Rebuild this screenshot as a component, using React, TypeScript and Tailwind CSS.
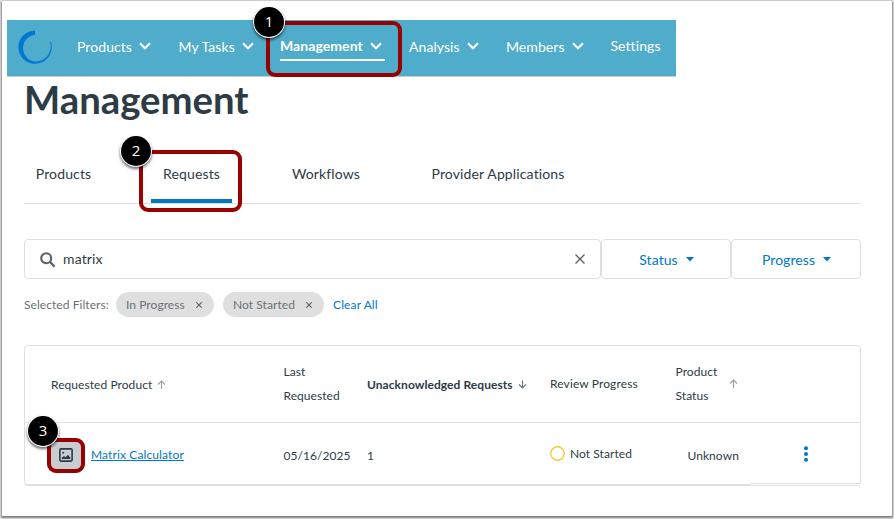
import { ReactNode } from "react";

interface NavItemProps {
  label: string;
  width: string;
  active?: boolean;
  menu?: boolean;
}

interface StepProps {
  value: number;
  className: string;
}

const navItems: NavItemProps[] = [
  { label: "Products", width: "w-[101.5px]", menu: true },
  { label: "My Tasks", width: "w-[101.5px]", menu: true },
  { label: "Management", width: "w-[129px]", menu: true, active: true },
  { label: "Analysis", width: "w-[97px]", menu: true },
  { label: "Members", width: "w-[104.5px]", menu: true },
  { label: "Settings", width: "w-[60px]" },
];

const tabs = [
  { label: "Products", width: "w-[79px]", gap: "mr-[48px]" },
  { label: "Requests", width: "w-[81px]", gap: "mr-[48px]", active: true },
  { label: "Workflows", width: "w-[92px]", gap: "mr-[48px]" },
  { label: "Provider Applications", width: "w-[156px]", gap: "" },
];

// numbered marker of a walkthrough step
const Step = ({ value, className }: StepProps) => (
  <span
    className={`absolute z-10 flex size-[30px] items-center justify-center rounded-full bg-black pb-px text-[15px] leading-none tracking-normal text-white shadow-[0_0_0_1px_#fff,0_2px_3px_1px_rgba(0,0,0,0.6)] font-['Open_Sans',sans-serif] ${className}`}
  >
    {value}
  </span>
);

const Highlight = ({ className }: { className: string }) => (
  <span
    className={`pointer-events-none absolute rounded-[9px] border-4 border-[#990000] ${className}`}
  />
);

const Chevron = () => (
  <svg width="12" height="8" viewBox="0 0 12 8" fill="none">
    <path d="M1 1.2 6 6.2 11 1.2" stroke="#fff" strokeWidth="2.2" />
  </svg>
);

const Arrow = ({ down, className }: { down?: boolean; className?: string }) => (
  <svg width="9" height="9" viewBox="0 0 9 9" fill="none" className={className}>
    <path
      d={down ? "M4.5 0.5V8M1 4.5 4.5 8 8 4.5" : "M4.5 9V1M1 4.5 4.5 1 8 4.5"}
      stroke={down ? "#6b7078" : "#9a9ea4"}
      strokeWidth="1.1"
    />
  </svg>
);

const Cross = ({ size, stroke }: { size: number; stroke: number }) => (
  <svg width={size} height={size} viewBox="0 0 10 10" fill="none">
    <path d="M0.5 0.5 9.5 9.5M9.5 0.5 0.5 9.5" stroke="#5c616b" strokeWidth={stroke} />
  </svg>
);

const NavItem = ({ label, width, active, menu }: NavItemProps) => (
  <div className={`relative flex h-full shrink-0 items-center ${width}`}>
    {active ? (
      <>
        <div className="mt-[13px] flex h-[28px] w-[105px] items-center justify-between self-start border-b-2 border-white pr-[3px]">
          <span className="font-bold">{label}</span>
          <Chevron />
        </div>
        <Highlight className="-left-[14px] top-px h-[56px] w-[136px]" />
        <Step value={1} className="-left-[26px] -top-[13px]" />
      </>
    ) : (
      <>
        <span className={menu ? "-mt-[2px]" : "-mt-[4px]"}>{label}</span>
        {menu && (
          <span className="ml-[7px] -mt-[4px]">
            <Chevron />
          </span>
        )}
      </>
    )}
  </div>
);

const Chip = ({ label, width }: { label: string; width: string }) => (
  <span
    className={`flex h-[25px] items-center justify-between rounded-full bg-[#dfdfdf] pl-[10px] pr-[12px] ${width}`}
  >
    {label}
    <Cross size={6} stroke={1.8} />
  </span>
);

const FilterButton = ({ label }: { label: string }) => (
  <button className="flex h-[40px] w-[130px] items-center justify-center gap-[8px] rounded-[4px] border border-[#dfdfdf] pl-px text-[14px] tracking-[0.005em] text-[#0077c8]">
    {label}
    <svg width="8" height="5" viewBox="0 0 8 5">
      <path d="M0 0H8L4 4.6Z" fill="#0077c8" />
    </svg>
  </button>
);

const Cell = ({ className, children }: { className?: string; children?: ReactNode }) => (
  <div className={`flex items-center ${className ?? ""}`}>{children}</div>
);

export default function App() {
  return (
    <div className="h-[519px] w-[894px] overflow-hidden bg-[#f4f4f4] pl-[2px] pt-px font-['Lato',sans-serif] text-[#2d3b45]">
      <main className="h-[515px] w-[890px] bg-white pl-[5px] pt-[19px] shadow-[0_1px_2px_1px_rgba(0,0,0,0.5)]">
        <nav className="flex h-[57px] w-[669px] items-center border-b border-[#c7cdd1] bg-[#50accb] text-[14px] leading-[20px] tracking-[0.005em] text-white">
          <svg width="34" height="34" viewBox="0 0 34 34" className="-mt-[2px] ml-[11px] mr-[25px] shrink-0">
            <path
              d="M17 .4A16.7 16.7 0 1 0 32.8 11.5L32.2 12A15.4 15.4 0 0 1 18 31.6A13.5 13.5 0 0 1 17 4.7Z"
              fill="#0077d4"
            />
          </svg>
          {navItems.map((item) => (
            <NavItem key={item.label} {...item} />
          ))}
        </nav>

        <section className="ml-[17px] w-[837px]">
          <h1 className="h-[67px] text-[38.3px] font-bold leading-[45px]">Management</h1>

          <div className="flex h-[60px] border-b border-[#dfdfdf] text-[14px] tracking-[0.01em]">
            {tabs.map((tab) => (
              <div
                key={tab.label}
                className={`relative flex h-[59px] items-center justify-center ${tab.width} ${tab.gap} ${
                  tab.active ? "border-b-4 border-[#0077c0] pt-[4px]" : ""
                }`}
              >
                {tab.label}
                {tab.active && (
                  <>
                    <Highlight className="-left-[12px] top-[6px] h-[62px] w-[103px]" />
                    <Step value={2} className="-left-[30px] -top-[8px]" />
                  </>
                )}
              </div>
            ))}
          </div>

          <div className="mt-[35px] flex">
            <div className="flex h-[40px] w-[577px] items-center rounded-[4px] border border-[#dfdfdf] pl-[15px] pr-[15px] text-[14px] tracking-[0.01em]">
              <svg width="16" height="16" viewBox="0 0 16 16" fill="none" className="mr-[7px] mt-px">
                <circle cx="6.2" cy="6.2" r="5" stroke="#5c616b" strokeWidth="2.1" />
                <path d="M9.8 9.8 14.6 14.6" stroke="#5c616b" strokeWidth="2.3" />
              </svg>
              <span className="-mt-[2px] flex-1">matrix</span>
              <Cross size={10} stroke={1.4} />
            </div>
            <FilterButton label="Status" />
            <FilterButton label="Progress" />
          </div>

          <div className="mt-[13px] flex h-[25px] items-center text-[12px] tracking-[0.005em] text-[#6b7078]">
            <span className="w-[92px]">Selected Filters:</span>
            <Chip label="In Progress" width="w-[98px] mr-[9px]" />
            <Chip label="Not Started" width="w-[101px] mr-[9px]" />
            <a className="tracking-[0.01em] text-[#0077c8]">Clear All</a>
          </div>

          <div className="mt-[28px] h-[141px] rounded-[4px] border border-[#dfdfdf] text-[12px] tracking-[0.005em]">
            <div className="grid h-[77px] grid-cols-[232.5px_83.5px_183px_125.5px_1fr] border-b border-[#dfdfdf] pl-[26px] leading-[24px]">
              <Cell className="gap-[5px] pt-[2px]">
                Requested Product
                <Arrow className="-mt-[2px]" />
              </Cell>
              <Cell>
                Last
                <br />
                Requested
              </Cell>
              <Cell className="gap-[5px] pt-[2px] font-bold">
                Unacknowledged Requests
                <Arrow down className="-mt-[2px]" />
              </Cell>
              <Cell className="tracking-[0.01em]">Review Progress</Cell>
              <Cell>
                <span className="w-[53px]">Product Status</span>
                <Arrow className="-mt-[2px]" />
              </Cell>
            </div>

            <div className="flex h-[62px] flex-col">
              <div className="grid h-[61px] grid-cols-[232.5px_83.5px_183px_137.5px_110px_1fr] pl-[26px]">
                <Cell className="pt-[4px]">
                  <div className="relative -ml-[4px] mr-[6px] flex h-[35px] w-[38px] items-center justify-center rounded-[9px] bg-[#c7cdd1]">
                    <svg width="14" height="14" viewBox="0 0 14 14" fill="none">
                      <rect x=".9" y=".9" width="12.2" height="12.2" rx="1" stroke="#2d3b45" strokeWidth="1.6" />
                      <circle cx="4.3" cy="4.7" r="1" fill="#2d3b45" />
                      <path d="M2.8 11V9.8L5 8l1.5 1.2L9 6.8l2.3 3V11Z" fill="#2d3b45" />
                    </svg>
                    <Highlight className="inset-0" />
                    <Step value={3} className="-left-[19px] -top-[22px]" />
                  </div>
                  <a className="tracking-[0.01em] text-[#0077c8] underline underline-offset-1">Matrix Calculator</a>
                </Cell>
                <Cell className="pt-[5px]">05/16/2025</Cell>
                <Cell className="pt-[5px]">1</Cell>
                <Cell className="gap-[5px] pt-px">
                  <svg width="15" height="15" viewBox="0 0 15 15" fill="none">
                    <circle cx="7.5" cy="7.5" r="6.7" stroke="#fdc83c" strokeWidth="1.4" />
                  </svg>
                  Not Started
                </Cell>
                <Cell className="pt-[5px]">Unknown</Cell>
                <Cell className="pt-[2px]">
                  <svg width="16" height="16" viewBox="0 0 16 16" fill="#0077c8">
                    <circle cx="8" cy="2.2" r="2" />
                    <circle cx="8" cy="8" r="2" />
                    <circle cx="8" cy="13.8" r="2" />
                  </svg>
                </Cell>
              </div>
              {/* the row's rule sits a pixel higher under the actions column */}
              <div className="flex h-[2px] shrink-0 items-end">
                <span className="h-px w-[726px] bg-[#dfdfdf]" />
                <span className="mb-px h-px flex-1 bg-[#dfdfdf]" />
              </div>
            </div>
          </div>
        </section>
      </main>
    </div>
  );
}
